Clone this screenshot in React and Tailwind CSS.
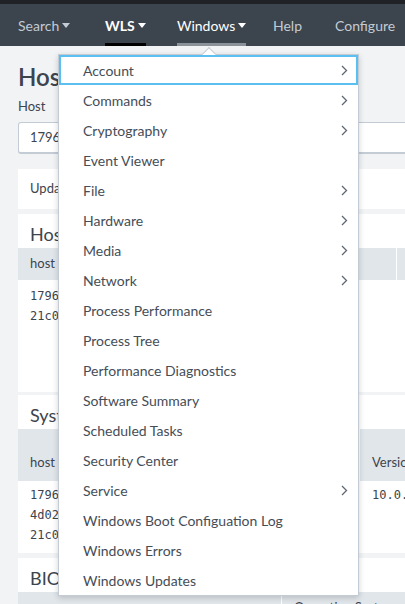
import React from 'react';

const menuItems = [
  { label: 'Account', sub: true, active: true },
  { label: 'Commands', sub: true },
  { label: 'Cryptography', sub: true },
  { label: 'Event Viewer' },
  { label: 'File', sub: true },
  { label: 'Hardware', sub: true },
  { label: 'Media', sub: true },
  { label: 'Network', sub: true },
  { label: 'Process Performance' },
  { label: 'Process Tree' },
  { label: 'Performance Diagnostics' },
  { label: 'Software Summary' },
  { label: 'Scheduled Tasks' },
  { label: 'Security Center' },
  { label: 'Service', sub: true },
  { label: 'Windows Boot Configuation Log' },
  { label: 'Windows Errors' },
  { label: 'Windows Updates' },
];

const mono = { fontFamily: '"DejaVu Sans Mono", monospace' };

function Caret() {
  return (
    <svg width="8" height="5" viewBox="0 0 8 5" className="ml-[3px] mt-[1px]">
      <path d="M0 0h8L4 5z" fill="currentColor" />
    </svg>
  );
}

function Chevron() {
  return (
    <svg width="7" height="11" viewBox="0 0 7 11" className="text-[#5c6773]">
      <path d="M1 1l4.5 4.5L1 10" fill="none" stroke="currentColor" strokeWidth="1.3" />
    </svg>
  );
}

function NavItem({ label, caret, bold, bright, bar, width }) {
  return (
    <div className={`flex h-full shrink-0 items-stretch ${width}`}>
      <span className={`relative flex items-center text-[14px] ${bold ? 'font-bold' : ''} ${bright ? 'text-white' : 'text-[#c3cbd4]'}`}>
        {label}
        {caret && <Caret />}
        {bar && <span className={`absolute bottom-0 left-0 right-0 h-[3px] ${bar}`} />}
      </span>
    </div>
  );
}

function Card({ title, children, className = '' }) {
  return (
    <div className={`shrink-0 bg-white ${className}`}>
      {title && <div className="px-[12px] pt-[9px] pb-[3px] text-[18px] leading-[22px] text-[#3c444d]">{title}</div>}
      {children}
    </div>
  );
}

export default function App() {
  return (
    <div className="relative h-[604px] w-[405px] overflow-hidden bg-[#f2f3f5]" style={{ fontFamily: 'Lato, "Open Sans", Arial, sans-serif' }}>
      <div className="h-[4px] bg-[#1f2226]" />
      <nav className="flex h-[42px] items-stretch bg-[#3c444d] pl-[18px] whitespace-nowrap">
        <NavItem label="Search" caret width="w-[87px]" />
        <NavItem label="WLS" caret bold bright bar="bg-black" width="w-[72px]" />
        <NavItem label="Windows" caret bright bar="bg-[#8a9199]" width="w-[96px]" />
        <NavItem label="Help" width="w-[62px]" />
        <NavItem label="Configure" width="w-[70px]" />
      </nav>

      <div className="flex flex-col pl-[18px]">
        <h1 className="mt-[16px] text-[24px] font-semibold leading-[30px] text-[#3c444d]">Host Overview</h1>
        <div className="mt-[6px] text-[13px] leading-[16px] text-[#3c444d]">Host</div>
        <div className="mt-[8px] flex h-[32px] w-[420px] shrink-0 items-center rounded-[3px] border border-b-2 border-[#c3cbd4] bg-white px-[11px] text-[13px] text-[#3c444d]">
          17960c1a-21c0
        </div>

        <Card className="mt-[15px] flex h-[40px] items-center px-[12px] text-[13px] text-[#3c444d]">
          Updated
        </Card>

        <Card title="Host" className="mt-[5px] h-[178px]">
          <div className="flex h-[32px] items-center bg-[#e1e6eb] text-[13px] text-[#3c444d]">
            <div className="w-[378px] shrink-0 px-[12px]">host</div>
            <div className="h-full w-[1px] shrink-0 bg-white" />
            <div className="flex-1" />
          </div>
          <div className="px-[12px] pt-[6px] text-[12px] leading-[20px] text-[#3c444d]" style={mono}>
            <div>17960c1a</div>
            <div>21c0ab34</div>
          </div>
        </Card>

        <Card title="System" className="mt-[3px] h-[158px]">
          <div className="flex h-[52px] items-end bg-[#e1e6eb] text-[13px] text-[#3c444d]">
            <div className="w-[341px] shrink-0 px-[12px] pb-[9px]">host</div>
            <div className="h-full w-[1px] shrink-0 bg-white" />
            <div className="shrink-0 px-[12px] pb-[9px]">Version</div>
          </div>
          <div className="flex whitespace-nowrap pt-[4px] text-[12px] leading-[20px] text-[#3c444d]" style={mono}>
            <div className="w-[342px] shrink-0 px-[12px]">
              <div>17960c1a</div>
              <div>4d02ef11</div>
              <div>21c0ab34</div>
            </div>
            <div className="shrink-0 px-[12px]">10.0.19045</div>
          </div>
        </Card>

        <Card title="BIOS" className="mt-[5px] h-[60px]">
          <div className="flex h-[32px] items-center whitespace-nowrap bg-[#e1e6eb] text-[13px] text-[#3c444d]">
            <div className="w-[263px] shrink-0" />
            <div className="h-full w-[1px] shrink-0 bg-white" />
            <div className="shrink-0 px-[12px]">Operating System</div>
          </div>
        </Card>
      </div>

      {/* dropdown */}
      <div className="absolute left-[58px] top-[54px] w-[301px] border border-[#c3cbd4] bg-white shadow-[0_2px_6px_rgba(0,0,0,0.18)]">
        <div className="absolute -top-[6px] left-[145px] h-[10px] w-[10px] rotate-45 border-l border-t border-[#c3cbd4] bg-white" />
        <ul className="relative">
          {menuItems.map((it) => (
            <li
              key={it.label}
              className={
                it.active
                  ? 'flex h-[30px] items-center justify-between border-2 border-[#5bc0f0] pl-[22px] pr-[8px] text-[14px] text-[#454d57]'
                  : 'flex h-[30px] items-center justify-between pl-[24px] pr-[10px] text-[14px] text-[#454d57]'
              }
            >
              <span>{it.label}</span>
              {it.sub && <Chevron />}
            </li>
          ))}
        </ul>
      </div>
    </div>
  );
}
